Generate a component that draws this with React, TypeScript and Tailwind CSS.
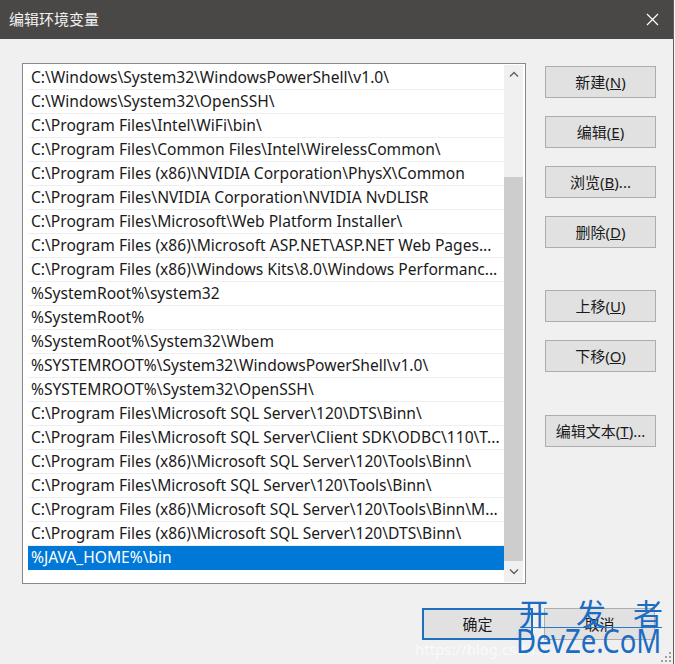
import React from "react";

const rows: string[] = [
  "C:\\Windows\\System32\\WindowsPowerShell\\v1.0\\",
  "C:\\Windows\\System32\\OpenSSH\\",
  "C:\\Program Files\\Intel\\WiFi\\bin\\",
  "C:\\Program Files\\Common Files\\Intel\\WirelessCommon\\",
  "C:\\Program Files (x86)\\NVIDIA Corporation\\PhysX\\Common",
  "C:\\Program Files\\NVIDIA Corporation\\NVIDIA NvDLISR",
  "C:\\Program Files\\Microsoft\\Web Platform Installer\\",
  "C:\\Program Files (x86)\\Microsoft ASP.NET\\ASP.NET Web Pages...",
  "C:\\Program Files (x86)\\Windows Kits\\8.0\\Windows Performanc...",
  "%SystemRoot%\\system32",
  "%SystemRoot%",
  "%SystemRoot%\\System32\\Wbem",
  "%SYSTEMROOT%\\System32\\WindowsPowerShell\\v1.0\\",
  "%SYSTEMROOT%\\System32\\OpenSSH\\",
  "C:\\Program Files\\Microsoft SQL Server\\120\\DTS\\Binn\\",
  "C:\\Program Files\\Microsoft SQL Server\\Client SDK\\ODBC\\110\\T...",
  "C:\\Program Files (x86)\\Microsoft SQL Server\\120\\Tools\\Binn\\",
  "C:\\Program Files\\Microsoft SQL Server\\120\\Tools\\Binn\\",
  "C:\\Program Files (x86)\\Microsoft SQL Server\\120\\Tools\\Binn\\M...",
  "C:\\Program Files (x86)\\Microsoft SQL Server\\120\\DTS\\Binn\\",
  "%JAVA_HOME%\\bin",
];

const font = { fontFamily: '"Noto Sans", "Noto Sans CJK SC", sans-serif' };

function Btn({ children, className = "" }: { children: React.ReactNode; className?: string }) {
  return (
    <div
      className={
        "w-[111px] h-[32px] flex items-center justify-center bg-[#e1e1e1] border border-[#adadad] text-[15px] text-[#1a1a1a] " +
        className
      }
    >
      {children}
    </div>
  );
}

export default function App() {
  return (
    <div className="w-[675px] h-[664px] bg-[#f7f7f7] overflow-hidden" style={font}>
      <div className="relative w-[674px] h-[664px] bg-[#f0f0f0] border-r border-[#5f5f5f] flex flex-col">
        {/* title bar */}
        <div className="h-[39px] bg-[#4a4846] flex items-center justify-between pl-[9px] pr-[14px] shrink-0">
          <span className="text-[15px] text-[#f2f2f2]">编辑环境变量</span>
          <svg width="13" height="13" viewBox="0 0 13 13">
            <path d="M1 1 L12 12 M12 1 L1 12" stroke="#ffffff" strokeWidth="1.2" />
          </svg>
        </div>

        {/* body */}
        <div className="flex">
          {/* list */}
          <div className="ml-[22px] mt-[24px] w-[504px] h-[521px] border border-[#8a8a8a] bg-white flex pl-[5px] pr-[2px]">
            <div className="w-[476px] pt-[2px] flex flex-col">
              {rows.map((r, i) => {
                const sel = i === rows.length - 1;
                return (
                  <div
                    key={i}
                    className={
                      "h-[24px] shrink-0 flex items-center pl-[3px] whitespace-nowrap overflow-hidden text-[15.6px] " +
                      (sel
                        ? "bg-[#0078d7] text-white"
                        : "border-b border-[#efefef] text-[#1a1a1a]")
                    }
                  >
                    {r}
                  </div>
                );
              })}
            </div>
            {/* scrollbar */}
            <div className="w-[19px] my-[1px] bg-[#f0f0f0] flex flex-col">
              <div className="h-[17px] flex items-center justify-center shrink-0">
                <svg width="10" height="6" viewBox="0 0 10 6">
                  <path d="M1 5.5 L5 1.5 L9 5.5" stroke="#606060" strokeWidth="1.4" fill="none" />
                </svg>
              </div>
              <div className="h-[95px] shrink-0" />
              <div className="h-[384px] bg-[#cdcdcd] shrink-0" />
              <div className="flex-1 flex items-center justify-center">
                <svg width="10" height="6" viewBox="0 0 10 6">
                  <path d="M1 0.5 L5 4.5 L9 0.5" stroke="#606060" strokeWidth="1.4" fill="none" />
                </svg>
              </div>
            </div>
          </div>

          {/* right buttons */}
          <div className="ml-[19px] mt-[27px] flex flex-col">
            <Btn>
              新建(<u>N</u>)
            </Btn>
            <Btn className="mt-[18px]">
              编辑(<u>E</u>)
            </Btn>
            <Btn className="mt-[18px]">
              浏览(<u>B</u>)...
            </Btn>
            <Btn className="mt-[18px]">
              删除(<u>D</u>)
            </Btn>
            <Btn className="mt-[42px]">
              上移(<u>U</u>)
            </Btn>
            <Btn className="mt-[18px]">
              下移(<u>O</u>)
            </Btn>
            <Btn className="mt-[43px]">
              编辑文本(<u>T</u>)...
            </Btn>
          </div>
        </div>

        {/* bottom buttons */}
        <div className="flex justify-end mt-[24px] pr-[18px] gap-[11px]">
          <div className="w-[111px] h-[32px] flex items-center justify-center bg-[#e1e1e1] border-2 border-[#1e6fbf] text-[15px] text-[#1a1a1a]">
            确定
          </div>
          <Btn>取消</Btn>
        </div>

        {/* watermark overlay */}
        <div className="absolute left-[415px] top-[638px] text-[15px] text-white/70 whitespace-nowrap">
          https://blog.csdn.n
        </div>
        <div className="absolute left-[520px] top-[627px] w-[142px] h-[1px] bg-[#2a78c8]" />
        <div
          className="absolute left-[519px] top-[597px] text-[30px] leading-none text-[#1b6cc2] whitespace-nowrap tracking-[27px]"
          style={{ fontFamily: '"Noto Sans CJK SC", sans-serif', fontWeight: 400 }}
        >
          开发者
        </div>
        <div
          className="absolute left-[516px] top-[625px] text-[32px] leading-none text-[#1b6cc2] whitespace-nowrap origin-left scale-x-[0.86]"
          style={{ fontFamily: '"Noto Sans", sans-serif', fontWeight: 400 }}
        >
          DevZe.CoM
        </div>
        {/* resize grip */}
        <svg className="absolute right-[2px] bottom-[2px]" width="10" height="10" viewBox="0 0 10 10">
          <rect x="8" y="0" width="2" height="2" fill="#a0a0a0" />
          <rect x="4" y="4" width="2" height="2" fill="#a0a0a0" />
          <rect x="8" y="4" width="2" height="2" fill="#a0a0a0" />
          <rect x="0" y="8" width="2" height="2" fill="#a0a0a0" />
          <rect x="4" y="8" width="2" height="2" fill="#a0a0a0" />
          <rect x="8" y="8" width="2" height="2" fill="#a0a0a0" />
        </svg>
      </div>
    </div>
  );
}
